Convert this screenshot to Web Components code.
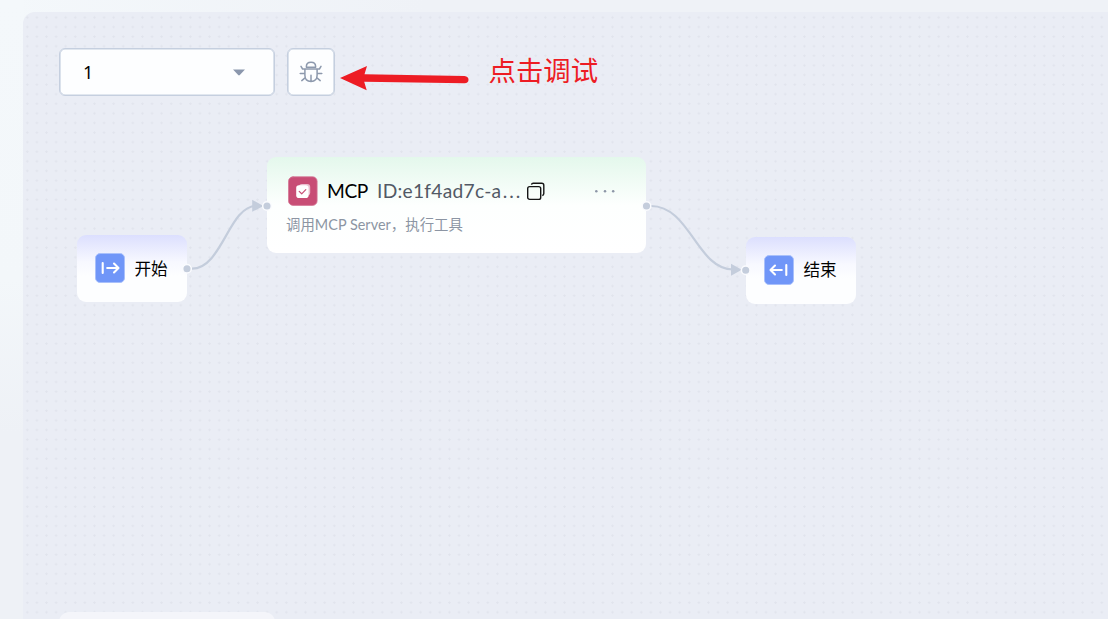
<!DOCTYPE html>
<html lang="zh-CN">
<head>
<meta charset="utf-8">
<title>Workflow</title>
<style>
html,body{margin:0;height:100%;overflow:hidden}
body{font-family:Lato,"Noto Sans CJK SC",sans-serif;background:#eff2f7}
</style>
</head>
<body>
<flow-app></flow-app>
<script>
const define = (name, html) => customElements.define(name, class extends HTMLElement {
  constructor() {
    super();
    const t = document.createElement('template');
    t.innerHTML = html;
    this.attachShadow({mode: 'open'}).append(t.content.cloneNode(true));
  }
});

define('version-select', `<style>
:host{box-sizing:border-box;display:flex;align-items:center;justify-content:space-between;width:216px;height:48px;padding:0 29px 0 23px;border:1px solid #c5cfdf;box-shadow:inset 0 0 0 .6px #c5cfdf;border-radius:6px;background:#fdfeff;color:#000;font:18px/24px "Noto Sans",sans-serif}
svg{display:block}
</style><slot></slot><svg width="12" height="7"><path d="M0 .5H12L6.8 6Q6 6.8 5.2 6Z" fill="#8b97ad"/></svg>`);

define('debug-button', `<style>
:host{box-sizing:border-box;display:flex;align-items:center;justify-content:center;width:48px;height:48px;border:1px solid #c5cfdf;box-shadow:inset 0 0 0 .6px #c5cfdf;border-radius:6px;background:#fdfeff}
svg{display:block}
</style><svg width="24" height="24" viewBox="0 0 24 24" fill="none" stroke="#8d99ad" stroke-width="1.5" stroke-linecap="round" stroke-linejoin="round"><path d="M7.4 7.2V6.3Q7.4 2.2 12 2.2T16.6 6.3V7.2ZM5.9 9H18.1V15.3Q18.1 21.4 12 21.4T5.9 15.3ZM12 15.2V21.2M2 6.4L3.6 9H5.9M22 6.4L20.4 9H18.1M1.2 13.6H5.7M18.3 13.6H22.8M2.8 20.6L6.3 17.7M21.2 20.6L17.7 17.7"/></svg>`);

define('tool-bar', `<style>:host{display:flex;gap:12px;padding:36px 0 0 36px}</style><slot></slot>`);

define('copy-icon', `<style>:host{display:block;width:19px;height:19px}svg{display:block}</style>
<svg width="19" height="19" viewBox="0 0 19 19" fill="none" stroke="#151515" stroke-width="1.4"><rect x="1.7" y="4.6" width="13" height="12.8" rx="2"/><path d="M5.4 2.6Q5.8 1.3 7.2 1.3H15.8Q17.8 1.3 17.8 3.4V11.6Q17.8 13.2 16.3 13.6"/></svg>`);

define('flow-node', `<style>
:host{box-sizing:border-box;display:block;border-radius:9px;background:linear-gradient(#dcdffe 0,#f7f8ff 40%,#fdfeff 62%,#fdfeff 100%);padding:18px 0 0 18.5px}
:host([kind=tool]){background:linear-gradient(#e4f8ec 0,#fdfffe 50%,#fff 100%);padding:19px 0 0 20.5px}
.head{display:flex;align-items:center;gap:9.5px;height:30px;color:#000;font-size:16.6px;line-height:30px;white-space:nowrap}
.label{display:block;flex:1;padding-top:var(--label-drop,2px)}
:host([kind=tool]) .label{padding:0}
</style><div class="head"><slot name="icon"></slot><div class="label"><slot></slot></div></div><slot name="description"></slot>`);

define('node-icon', `<style>
:host{display:block;width:30px;height:30px;flex:none}svg{display:block}
g{display:none}
:host([type=start]) .start,:host([type=end]) .end,:host([type=mcp]) .mcp{display:block}
</style><svg width="30" height="30" viewBox="0 0 30 30" fill="none" stroke-linecap="round" stroke-linejoin="round">
<g class="start"><rect x=".5" y=".5" width="29" height="29" rx="4.5" fill="#7096f8" stroke="#a9c0fb"/><path d="M7.7 10V20M12.2 15H23.4M19 10.5L23.5 15L19 19.5" stroke="#fff" stroke-width="2.1"/></g>
<g class="end"><rect x=".5" y=".5" width="29" height="29" rx="4.5" fill="#7096f8" stroke="#a9c0fb"/><path d="M22.3 10V20M17.8 15H6.6M11 10.5L6.5 15L11 19.5" stroke="#fff" stroke-width="2.1"/></g>
<g class="mcp"><rect x=".5" y=".8" width="28.6" height="28.6" rx="4.5" fill="#c84d75" stroke="#d47795" stroke-width=".8"/><rect x="11" y="8" width="11.2" height="11.6" rx="3" fill="#eabfce"/><rect x="8.2" y="9.3" width="12.4" height="12.7" rx="2.8" fill="#fff"/><path d="M11.2 15.4L13.7 17.8L17.8 13.6" stroke="#c84d75" stroke-width="1.2"/></g>
</svg>`);

define('tool-title', `<style>
:host{display:flex;align-items:center;font-size:19.2px;line-height:30px}
.name{width:50px;letter-spacing:-.4px}
.id{width:149px;color:#525965;letter-spacing:.26px}
.more{margin-left:49px;display:block}
</style><span class="name"><slot name="name"></slot></span><span class="id"><slot name="id"></slot></span><copy-icon></copy-icon><svg class="more" width="22" height="4" fill="#8d96a7"><circle cx="2.3" cy="2.3" r="1.25"/><circle cx="11" cy="2.3" r="1.25"/><circle cx="19.2" cy="2.3" r="1.25"/></svg>`);

define('tool-description', `<style>:host{display:block;margin:8px 0 0 -1.5px;color:#8c95a3;font-size:14.4px;line-height:22px;letter-spacing:.04px;white-space:nowrap}</style><slot></slot>`);

define('flow-links', `<style>:host{position:absolute;inset:0;pointer-events:none}svg{display:block}</style>
<svg width="1108" height="619" fill="none">
<g stroke="#c4cddc" stroke-width="2.2"><path d="M192 268.7C222 268.7 229 206 256 206"/><path d="M651 206C690 206 697 269.5 733 269.5"/></g>
<path d="M252.2 199.8L263.5 206L252.2 211.8ZM731 263.8L741.8 269.8L731 275.8Z" fill="#c4cddc"/>
<g fill="#c4cddc" stroke="#fafbfe" stroke-width="1.5"><circle cx="187" cy="268.7" r="4.3"/><circle cx="267" cy="206" r="4.3"/><circle cx="646.5" cy="206" r="4.3"/><circle cx="745.7" cy="270.2" r="4.3"/></g></svg>`);

define('callout-note', `<style>
:host{display:block;color:#ed1c24;font-size:27.4px;line-height:40px;white-space:nowrap}
svg{position:absolute;left:-149.5px;top:11px}
</style><svg width="132" height="32"><path d="M1 16L28 4L25.5 12.2L125.5 14Q129.5 14.5 129.5 17.7T125.5 21.3L25.2 19.8L27.7 28.3Z" fill="#ed1c24"/></svg><slot></slot>`);

define('flow-app', `<style>
:host{display:block;box-sizing:border-box;width:1108px;height:619px;padding:12px 0 0 23px;position:relative;overflow:hidden;background:linear-gradient(100deg,#f4f8fb 0,#eff2f7 35%,#eff2f7)}
:host::before{content:"";position:absolute;left:0;top:0;width:23px;height:619px;background:linear-gradient(#f4f8fb,#f3f7fa 45%,#eef1f6 70%,#eef1f6)}
main{position:relative;box-sizing:border-box;height:607px;border-radius:12px 0 0;overflow:hidden;display:flex;flex-direction:column;justify-content:space-between;background:radial-gradient(circle at 4.3px 5.4px,#e1e4ed 0,#e1e4ed .9px,transparent 1.35px) 0 0/9.6px 9.6px,#eaedf5}
.bottom{flex:none;width:216px;height:20px;margin:0 0 -13px 36px;border-radius:12px;background:#f4f5fa}
flow-node,callout-note{position:absolute}
.start{left:76.5px;top:235px;width:110.5px;height:67px}
.mcp{left:267px;top:157px;width:379px;height:96px}
.end{left:745.5px;top:237px;width:110.5px;height:67px;--label-drop:0px}
.dots{letter-spacing:2px;margin-left:1.4px}
callout-note{left:488.5px;top:51px}
</style>
<main><tool-bar><version-select>1</version-select><debug-button></debug-button></tool-bar><div class="bottom"></div></main>
<flow-node class="start"><node-icon slot="icon" type="start"></node-icon>开始</flow-node>
<flow-node class="mcp" kind="tool"><node-icon slot="icon" type="mcp"></node-icon><tool-title><span slot="name">MCP</span><span slot="id">ID:e1f4ad7c-a<span class="dots">...</span></span></tool-title><tool-description slot="description">调用MCP Server，执行工具</tool-description></flow-node>
<flow-node class="end"><node-icon slot="icon" type="end"></node-icon>结束</flow-node>
<flow-links></flow-links>
<callout-note>点击调试</callout-note>`);
</script>
</body>
</html>
